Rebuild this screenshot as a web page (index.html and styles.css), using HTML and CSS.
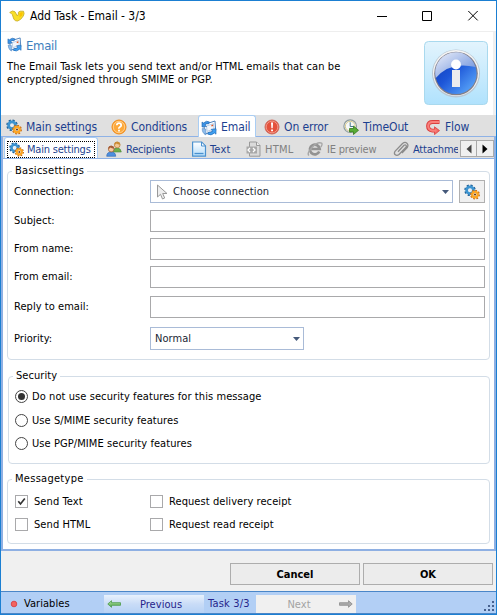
FILE: index.html
```
<!DOCTYPE html>
<html lang="en">
<head>
<meta charset="utf-8">
<title>Add Task - Email - 3/3</title>
<link rel="stylesheet" href="styles.css">
</head>
<body>
<svg class="defs" aria-hidden="true">
  <defs>
    <linearGradient id="panelBg" x1="0" y1="0" x2="0" y2="1"><stop offset="0" stop-color="#e3f4fd"/><stop offset="1" stop-color="#b0e2fd"/></linearGradient>
    <linearGradient id="ball" x1="0" y1="0" x2="1" y2="1"><stop offset="0" stop-color="#0a35b0"/><stop offset=".45" stop-color="#1d56d8"/><stop offset="1" stop-color="#65b5ff"/></linearGradient>
    <linearGradient id="gloss" x1="0" y1="0" x2="1" y2="1"><stop offset="0" stop-color="#eef1fa"/><stop offset="1" stop-color="#5e86d8"/></linearGradient>
    <linearGradient id="doc" x1="0" y1="0" x2="0" y2="1"><stop offset="0" stop-color="#fff"/><stop offset="1" stop-color="#b4dcfa"/></linearGradient>
    <linearGradient id="green" x1="0" y1="0" x2="0" y2="1"><stop offset="0" stop-color="#b9e6a8"/><stop offset="1" stop-color="#4ba34a"/></linearGradient>
  </defs>
  <symbol id="gears" viewBox="0 0 16 16">
    <circle cx="6" cy="6.2" r="4.6" fill="none" stroke="#1f5f96" stroke-width="2.4" stroke-dasharray="2 1.6"/>
    <circle cx="6" cy="6.2" r="3.4" fill="none" stroke="#3d94d0" stroke-width="2.8"/>
    <circle cx="6" cy="6.2" r="1.5" fill="#e7eef4"/>
    <circle cx="11" cy="10.6" r="4" fill="none" stroke="#c76a10" stroke-width="1.9" stroke-dasharray="1.7 1.4"/>
    <circle cx="11" cy="10.6" r="2.7" fill="#fff" stroke="#fba524" stroke-width="2.4"/>
    <circle cx="11" cy="10.6" r="1.1" fill="#6d4420"/>
  </symbol>
  <symbol id="question" viewBox="0 0 16 16">
    <circle cx="8" cy="8" r="7" fill="#fda83a" stroke="#f18a18"/>
    <circle cx="8" cy="8" r="5.7" fill="none" stroke="#ffd79c" stroke-width=".8"/>
    <path d="M5.8 6.3Q5.9 4.2 8 4.2t2.2 2Q10.200 7.300 8.900 8T8 9.700" fill="none" stroke="#fff" stroke-width="1.7"/><path d="M7.100 10.800h1.800v1.700H7.100z" fill="#fff"/>
  </symbol>
  <symbol id="mail" viewBox="0 0 16 16">
    <path d="M3 4.500 14 1l.7 9.500L3.500 14z" fill="#fff" stroke="#4b80bc"/>
    <path d="M5.500 6 12.500 3.700l.6 5.300-7 2.400z" fill="#f2f6fc" stroke="#9bb7d9" stroke-width=".7"/>
    <path d="M10.300 5l1.700-.5.2 1.600-1.700.5z" fill="#e05a2a"/>
    <path d="M1 7V2l1.500 1Q5.500 0 8.500 2L7.500 4Q5.500 3 4 4.700L5.500 6.500z" fill="#3c94e6" stroke="#1c62ad" stroke-width=".6"/>
    <path d="M15 8.800v5.400l-1.500-1.200Q10 16.300 6.500 14l1.400-2q2 1 3.700-.8L10.200 9.300z" fill="#3fa0f2" stroke="#1c62ad" stroke-width=".6"/>
    <path d="M1.200 8.500Q1 13 5 15L4.700 9z" fill="#8fbdec" stroke="#4b80bc" stroke-width=".5"/>
  </symbol>
  <symbol id="error" viewBox="0 0 16 16">
    <circle cx="8" cy="8" r="7" fill="#e4513c" stroke="#cf6a5c"/>
    <circle cx="8" cy="8" r="5.800" fill="none" stroke="#f4a496" stroke-width=".8"/>
    <path d="M7 3.500h2.100l-.4 5.700H7.400zM7.100 10.400h1.900v1.900H7.100z" fill="#fff"/>
  </symbol>
  <symbol id="timeout" viewBox="0 0 16 16">
    <circle cx="7.200" cy="7.200" r="6.300" fill="#f6f8f8" stroke="#8e9c9e" stroke-width="1.200"/>
    <circle cx="7.200" cy="7.200" r="4.900" fill="none" stroke="#d8c98a" stroke-width="1"/>
    <path d="M7.200 3.300v4.200h3" fill="none" stroke="#48788f" stroke-width="1"/>
    <path d="M6.500 9.500h4V7l5 4.300-5 4.200v-2.600h-4z" fill="#59ac37" stroke="#34781c" stroke-width=".8"/>
  </symbol>
  <symbol id="flow" viewBox="0 0 16 16">
    <path d="M14.500 3H7.500Q3 3 3 7t4.500 4.600h3" fill="none" stroke="#dc3f3f" stroke-width="3.800"/>
    <path d="M9.500 7.800 14.500 11.600l-5 4z" fill="#f46a66" stroke="#dc3f3f" stroke-width=".8"/>
    <path d="M14.200 3H7.500Q3.200 3 3.200 7T7.500 11.600h4" fill="none" stroke="#f9807b" stroke-width="2.100"/>
  </symbol>
  <symbol id="people" viewBox="0 0 16 16">
    <path d="M7 11q0-4 4-4t4.300 4z" fill="#6fae4b" stroke="#4b8a3b" stroke-width=".6"/>
    <circle cx="11.200" cy="3.900" r="2.900" fill="#f4c795" stroke="#b7782c" stroke-width=".7"/>
    <path d="M8.300 3.600Q8.500.600 11.200.700t3 3Q11.500 3.400 10.500 2.400 9.700 3.600 8.300 3.600z" fill="#c98b33"/>
    <path d="M.700 15.300q0-4.300 4.500-4.300t4.500 4.300z" fill="#4d8fdf" stroke="#2f63ab" stroke-width=".6"/>
    <circle cx="5.200" cy="8" r="2.900" fill="#f6c8a0" stroke="#9a5a30" stroke-width=".7"/>
    <path d="M2.300 7.700Q2.500 4.700 5.200 4.800t3 3Q5.500 7.500 4.500 6.500 3.700 7.700 2.300 7.700z" fill="#a65c36"/>
  </symbol>
  <symbol id="page" viewBox="0 0 16 16">
    <path d="M1.600 1h9l3.900 4v10.200H1.600z" fill="url(#doc)" stroke="#4a91cf" stroke-width="1.200"/>
    <path d="M10.500 1v4h4z" fill="#fff" stroke="#4a91cf"/>
    <path d="M3.500 12.500h9" stroke="#4a91cf" stroke-width="1.300"/>
  </symbol>
  <symbol id="html" viewBox="0 0 16 16">
    <path d="M3.500 1h7l3.500 3.500v10.700H3.500z" fill="#dadada" stroke="#999"/>
    <path d="M10.500 1v3.500H14" fill="#eee" stroke="#999"/>
    <path d="M.500 5.500h10.500v7H.500z" fill="#a8a8a8"/>
    <path d="M4 7 2 9l2 2M7 7l2 2-2 2" fill="none" stroke="#fff" stroke-width="1.300"/>
  </symbol>
  <symbol id="ie" viewBox="0 0 16 16">
    <path d="M12.300 10.500A4.900 4.900 0 1 1 12.700 8H4.500" fill="none" stroke="#929292" stroke-width="2.700"/>
    <path d="M2 14.500Q-.5 12.500 5 6.500T14.700 2.200q1 1-.8 3.800" fill="none" stroke="#a6a6a6" stroke-width="1.400"/>
  </symbol>
  <symbol id="clip" viewBox="0 0 16 16">
    <path d="M5 10.700 11 4.300q1.200-1 2 0t0 2L6 13.500q-2 1.700-3.700.3t-.1-3.700L9.500 2.500q2.500-2 4.400-.300t.3 4.400L9 12" fill="none" stroke="#8b8b8b" stroke-width="1.300"/>
  </symbol>
</svg>

<div class="window">
  <header class="titlebar">
    <svg class="logo" viewBox="0 0 16 12"><path d="M.700 2.500Q3.500-.200 6 1.800L8.400 6 9.400 4Q8.600 1.800 11 1.200h3.500q1.300 2.500-.2 4.800-2.300 4-5.600 5Q6 11.500 4.800 9L3.300 4.600Q2.500 3.200.700 2.500z" fill="#f8df28" stroke="#c7aa25" stroke-width=".8"/><path d="M10.300 3.600 12 2.200l1.900.2-.7 2.800-2.500 2.300z" fill="#fdc300"/></svg>
    <h1>Add Task - Email - 3/3</h1>
    <svg class="controls" viewBox="0 0 102 12"><path d="M0 6.500h10M45.500 1.500h9v9h-9zM91.300 1l9.400 9.400M100.700 1l-9.400 9.400" fill="none" stroke="#000"/></svg>
  </header>

  <section class="intro">
    <div class="intro-text">
      <h2><svg class="ico"><use href="#mail"/></svg>Email</h2>
      <p>The Email Task lets you send text and/or HTML emails that can be<br>encrypted/signed through SMIME or PGP.</p>
    </div>
    <svg class="info" viewBox="0 0 64 64">
      <rect x=".500" y=".500" width="63" height="63" rx="4" fill="url(#panelBg)" stroke="#a9d9ee"/>
      <circle cx="32" cy="32.500" r="24" fill="#b9c8d4"/>
      <circle cx="32" cy="32" r="23" fill="#f4f4f4"/>
      <circle cx="32" cy="32.500" r="21.800" fill="#817e88"/>
      <circle cx="32" cy="32.500" r="20.600" fill="url(#ball)"/>
      <path d="M11.800 37A20.600 20.600 0 0 1 51.500 26Q26 20 11.800 37z" fill="url(#gloss)"/>
      <circle cx="32" cy="23.500" r="4.900" fill="#fff"/>
      <path d="M28 29h8v17h-8z" fill="#ececee"/>
    </svg>
  </section>

  <nav class="tabs main-tabs">
    <a class="tab t-main"><svg class="ico"><use href="#gears"/></svg>Main settings</a>
    <a class="tab t-cond"><svg class="ico"><use href="#question"/></svg>Conditions</a>
    <a class="tab t-email active"><svg class="ico"><use href="#mail"/></svg>Email</a>
    <a class="tab t-error"><svg class="ico"><use href="#error"/></svg>On error</a>
    <a class="tab t-time"><svg class="ico"><use href="#timeout"/></svg>TimeOut</a>
    <a class="tab t-flow"><svg class="ico"><use href="#flow"/></svg>Flow</a>
  </nav>

  <main class="panel">
    <nav class="tabs sub-tabs">
      <a class="tab s-main active"><span class="focus"><svg class="ico"><use href="#gears"/></svg>Main settings</span></a>
      <a class="tab s-rec"><svg class="ico"><use href="#people"/></svg>Recipients</a>
      <a class="tab s-text"><svg class="ico"><use href="#page"/></svg>Text</a>
      <a class="tab s-html disabled"><svg class="ico"><use href="#html"/></svg>HTML</a>
      <a class="tab s-ie disabled"><svg class="ico"><use href="#ie"/></svg>IE preview</a>
      <a class="tab s-att"><svg class="ico"><use href="#clip"/></svg>Attachme</a>
      <span class="scroller">
        <button><svg viewBox="0 0 6 10"><path d="M5.500.500v9L.500 5z" fill="#444"/></svg></button>
        <button><svg viewBox="0 0 6 10"><path d="M.500.500v9L5.500 5z" fill="#000"/></svg></button>
      </span>
    </nav>

    <section class="group basic">
      <h3>Basicsettings</h3>
      <div class="row r-conn"><label>Connection:</label>
        <div class="combo wide"><svg class="cursor" viewBox="0 0 12 16"><path d="M1.500 1v12l3-2.700 2 4.700 2.200-1-2-4.500H11z" fill="#eee" stroke="#999"/></svg><span>Choose connection</span><svg class="arrow" viewBox="0 0 7 4"><path d="M0 0h7L3.500 4z"/></svg></div>
        <button class="gear-btn"><svg class="ico"><use href="#gears"/></svg></button></div>
      <div class="row"><label>Subject:</label><input></div>
      <div class="row"><label>From name:</label><input></div>
      <div class="row"><label>From email:</label><input></div>
      <div class="row r-reply"><label>Reply to email:</label><input></div>
      <div class="row r-prio"><label>Priority:</label>
        <div class="combo"><span>Normal</span><svg class="arrow" viewBox="0 0 7 4"><path d="M0 0h7L3.500 4z"/></svg></div></div>
    </section>

    <section class="group security">
      <h3>Security</h3>
      <label class="option"><i class="radio on"></i>Do not use security features for this message</label>
      <label class="option"><i class="radio"></i>Use S/MIME security features</label>
      <label class="option"><i class="radio"></i>Use PGP/MIME security features</label>
    </section>

    <section class="group message">
      <h3>Messagetype</h3>
      <div class="checks">
        <label class="option"><i class="check"><svg viewBox="0 0 11 11"><path d="M2.300 5.300 4.500 8 8.800 2.500" fill="none" stroke="#333" stroke-width="1.700"/></svg></i>Send Text</label>
        <label class="option"><i class="check"></i>Request delivery receipt</label>
        <label class="option"><i class="check"></i>Send HTML</label>
        <label class="option"><i class="check"></i>Request read receipt</label>
      </div>
    </section>
  </main>

  <div class="actions"><button>Cancel</button><button>OK</button></div>

  <footer class="status">
    <span class="vars"><svg class="dot" viewBox="0 0 8 8"><circle cx="4" cy="4" r="2.800" fill="#f3635f" stroke="#d9484e"/></svg>Variables</span>
    <span class="nav prev"><svg viewBox="0 0 14 8"><path d="M.800 4 4.500.700v2H13.500v2.600h-9v2z" fill="url(#green)" stroke="#4b9b48" stroke-width=".8"/></svg><b>Previous</b></span>
    <span class="count">Task 3/3</span>
    <span class="nav next"><b>Next</b><svg viewBox="0 0 14 8"><path d="M13.200 4 9.500.700v2H.500v2.600h9v2z" fill="#aaa" stroke="#8b8b8b" stroke-width=".8"/></svg></span>
    <svg class="grip" viewBox="0 0 12 12"><path d="M8 0h2v2H8zM4 4h2v2H4zM8 4h2v2H8zM0 8h2v2H0zM4 8h2v2H4zM8 8h2v2H8z" fill="#46618f"/></svg>
  </footer>
</div>
</body>
</html>
```
FILE: styles.css
```
* { box-sizing: border-box; }
body { margin: 0; font: 11px/13px "DejaVu Sans Condensed", "DejaVu Sans", sans-serif; font-stretch: condensed; color: #000; letter-spacing: .05px; }
h1, h2, h3, p { margin: 0; font-weight: normal; }
button, input { font: inherit; padding: 0; margin: 0; border-radius: 0; }
svg { flex: none; display: block; }
.defs { position: absolute; width: 0; height: 0; }
.ico { width: 16px; height: 16px; }

.window { width: 497px; height: 615px; border: 1px solid #1b7fd2; background: #fff; display: flex; flex-direction: column; overflow: hidden; }
.titlebar { height: 31px; border-bottom: 1px solid #eee; display: flex; align-items: center; padding: 0 17px 0 8px; }
.logo { width: 16px; height: 12px; }
.titlebar h1 { font-size: 12px; line-height: 16px; letter-spacing: -.03px; margin-left: 5px; flex: 1; }
.controls { width: 102px; height: 12px; }

.intro { height: 83px; display: flex; justify-content: space-between; border-right: 3px solid #f0f0f0; padding: 5px 5px 0 6px; }
.intro h2 { font-size: 13px; line-height: 17px; color: #3d7ebd; display: flex; gap: 4px; letter-spacing: -.3px; }
.intro h2 .ico { width: 15px; height: 15px; }
.intro p { margin-top: 6px; letter-spacing: .11px; white-space: nowrap; }
.info { width: 64px; height: 64px; margin-top: 4px; }

.tabs { display: flex; background: #e0e0e0; color: #1c3f8f; }
.tab { display: flex; align-items: center; flex: none; white-space: nowrap; }
.main-tabs { height: 22px; font-size: 12px; letter-spacing: -.1px; border-bottom: 1px solid #8fb2e6; padding-left: 2px; }
.main-tabs .tab { gap: 4px; padding-left: 3px; height: 22px; padding-top: 2px; }
.t-main { width: 105px; }
.t-cond { width: 90px; }
.main-tabs .t-email { width: 58px; padding-left: 2px; }
.main-tabs .t-error { width: 84px; padding-left: 8px; }
.t-time { width: 82px; }
.tab.active { background: #fff; border: 1px solid #a9cdf3; border-bottom: 0; border-radius: 3px 3px 0 0; }

.panel { height: 414px; border: solid #8fb0e3; border-width: 0 2px 2px; background: #fff; }
.sub-tabs { height: 22px; border-bottom: 1px solid #8fb2e6; letter-spacing: -.2px; position: relative; overflow: hidden; padding-left: 1px; }
.sub-tabs .tab { gap: 4px; height: 22px; padding-top: 2px; }
.sub-tabs .s-main { width: 94px; padding: 1px 0 0 2px; }
.focus { display: flex; align-items: center; gap: 3px; border: 1px dotted #000; width: 88px; height: 17px; }
.focus .ico { width: 15px; height: 15px; margin-left: 1px; }
.s-rec { width: 85px; padding-left: 8px; }
.s-text { width: 57px; padding-left: 8px; }
.s-text, .s-html { letter-spacing: .2px; }
.sub-tabs .s-text, .sub-tabs .s-html { gap: 3px; }
.s-html { width: 62px; padding-left: 6px; }
.s-ie { width: 85px; padding-left: 5px; }
.s-att { padding-left: 6px; }
.disabled { color: #818181; }
.scroller { position: absolute; right: 0; top: 3px; display: flex; background: #e0e0e0; padding-left: 2px; }
.scroller button { width: 17px; height: 17px; border: 1px solid #aaa; background: #f0f0f0; display: grid; place-items: center; }
.scroller button + button { margin-left: -1px; width: 18px; }
.scroller svg { width: 6px; height: 10px; }

.group { border: 1px solid #d3dde7; border-radius: 4px; width: 483px; margin-left: 4px; }
.group h3 { font-size: 11px; width: max-content; height: 13px; background: #fff; margin: -8px 0 0 4px; padding: 0 3px; }
.basic { height: 189px; margin-top: 12px; }
.security { height: 88px; width: 482px; margin: 16px 0 0 5px; }
.message { height: 65px; margin-top: 15px; }
.basic h3, .message h3 { letter-spacing: .28px; }
.row { display: flex; align-items: center; margin: 6px 4px 0 6px; height: 22px; }
.row label { width: 136px; padding-bottom: 1px; }
.row input { flex: 1; height: 22px; border: 1px solid #a9a9ab; background: #fff; }
.r-conn { height: 23px; margin-top: 3px; margin-bottom: 7px; }
.r-reply { margin-top: 8px; }
.r-prio { height: 23px; margin-top: 9px; }
.r-prio label { padding: 0; }
.combo { width: 154px; height: 23px; border: 1px solid #a9bbd7; display: flex; align-items: center; padding: 0 4px; color: #1b1f33; }
.combo span { flex: 1; padding-bottom: 1px; }
.combo.wide { width: 303px; }
.combo.wide span { letter-spacing: .12px; }
.cursor { width: 12px; height: 16px; margin: 0 5px 0 1px; }
.arrow { width: 7px; height: 4px; fill: #45597a; margin-right: -1px; }
.gear-btn { width: 26px; height: 23px; margin-left: 6px; border: 1px solid #b0b0b0; background: #f0f0f0; display: grid; place-items: center; }

.option { display: flex; align-items: center; gap: 5px; height: 13px; letter-spacing: .08px; }
.security .option { margin: 10px 0 0 6px; gap: 4px; }
.security .option:nth-of-type(1) { margin-top: 8px; }
.security .option:nth-of-type(2) { margin-top: 11px; }
.radio { width: 13px; height: 13px; border: 1px solid #444; border-radius: 50%; display: grid; place-items: center; }
.radio.on::after { content: ""; width: 7px; height: 7px; border-radius: 50%; background: #333; }
.checks { display: grid; grid-template-columns: 135px 1fr; row-gap: 10px; margin: 10px 0 0 7px; }
.check { width: 13px; height: 13px; border: 1px solid #a9a9ab; }
.message .option { gap: 6px; }

.actions { height: 40px; background: #f0f0f0; display: flex; justify-content: flex-end; align-items: flex-start; gap: 3px; padding: 12px 3px 0 0; }
.actions button { width: 130px; height: 22px; border: 1px solid #adadad; background: #ececec; font-weight: bold; color: #000; }

.status { height: 23px; background: #b2cff5; border: solid #4a86c8; border-width: 1px 0 1px; display: flex; position: relative; }
.vars { width: 103px; display: flex; align-items: center; padding: 2px 0 0 9px; gap: 6px; }
.dot { width: 8px; height: 8px; margin-top: 1px; }
.nav { width: 100px; height: 18px; margin-top: 3px; display: flex; align-items: center; background: linear-gradient(#e8f1fc, #c9dcf7 50%, #b7d2f5); color: #26248a; padding: 0 3px; }
.nav b { flex: 1; font-weight: normal; text-align: center; }
.nav svg { width: 14px; height: 8px; }
.count { width: 52px; color: #26248a; padding: 5px 0 0 4px; letter-spacing: .2px; white-space: nowrap; }
.next { background: #f0f0f0; color: #a3a3a3; }
.grip { position: absolute; right: 0; bottom: 0; width: 12px; height: 12px; }
```
